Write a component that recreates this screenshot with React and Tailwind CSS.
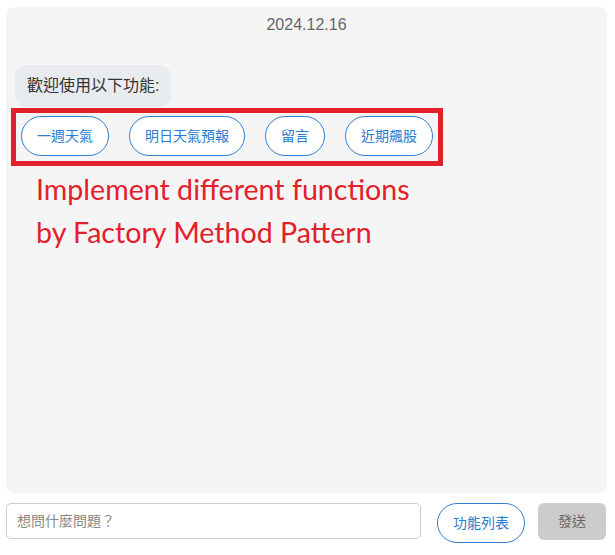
import React from "react";

const functions = ["一週天氣", "明日天氣預報", "留言", "近期飆股"];

const App = () => {
  return (
    <div className="w-[615px] h-[555px] bg-white font-['Liberation_Sans','Noto_Sans_CJK_TC',sans-serif] pl-[6px] pr-[8px] pt-[7px]">
      {/* chat panel */}
      <div className="w-[601px] h-[486px] bg-[#f5f5f5] rounded-lg flex flex-col items-start">
        <div className="w-full text-center text-[16px] leading-[18px] text-[#666] pt-[9px]">2024.12.16</div>

        <div className="mt-[31px] ml-[9px] h-[42px] px-[12px] flex items-center bg-[#e9ecef] rounded-[12px] text-[16px] text-[#333]">
          歡迎使用以下功能:
        </div>

        {/* highlighted quick replies */}
        <div className="mt-[1px] ml-[5px] w-[432px] h-[58px] border-[5px] border-[#e3202a] pl-[5px] pt-[3px] flex items-start gap-[20px]">
          {functions.map((name) => (
            <button
              key={name}
              className="h-[40px] px-[15px] rounded-full border border-[#2f80d1] bg-white text-[14px] text-[#2b7bd0] whitespace-nowrap"
            >
              {name}
            </button>
          ))}
        </div>

        <div className="mt-[2px] ml-[30px] font-['Lato',sans-serif] text-[28.6px] leading-[43px] text-[#e3202a]">
          <div>Implement different functions</div>
          <div>by Factory Method Pattern</div>
        </div>
      </div>

      {/* input row */}
      <div className="mt-[10px] flex items-start">
        <input
          className="w-[415px] h-[36px] border border-[#ccc] rounded-[5px] bg-white px-[10px] text-[14px] text-[#333] placeholder:text-[#888] outline-none"
          placeholder="想問什麼問題？"
        />
        <button className="ml-[16px] h-[40px] px-[15px] rounded-full border border-[#2f80d1] bg-white text-[14px] text-[#2b7bd0] whitespace-nowrap">
          功能列表
        </button>
        <button className="ml-[13px] w-[68px] h-[37px] rounded-md bg-[#ccc] text-[14px] text-[#666]">發送</button>
      </div>
    </div>
  );
};

export default App;
